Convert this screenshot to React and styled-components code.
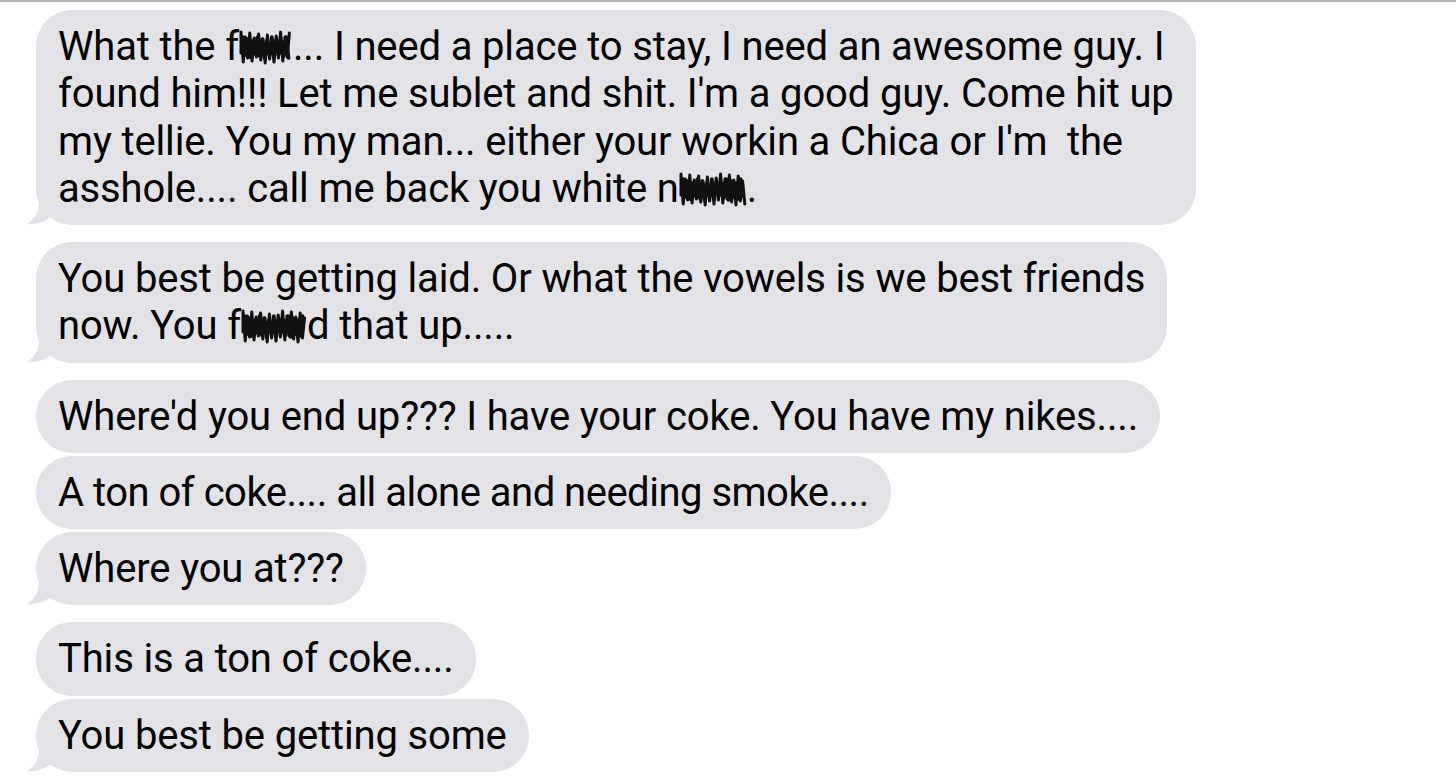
import React from "react";
import styled, { createGlobalStyle } from "styled-components";

const GlobalStyle = createGlobalStyle`
  html, body {
    margin: 0;
    padding: 0;
    background: #ffffff;
  }
  body {
    font-family: Roboto, "Liberation Sans", sans-serif;
  }
`;

const Page = styled.div`
  width: 1456px;
  height: 784px;
  box-sizing: border-box;
  border-top: 2px solid #b4b4b4;
  padding: 8px 0 0 36px;
  display: flex;
  flex-direction: column;
  align-items: flex-start;
  overflow: hidden;
`;

const Bubble = styled.div`
  position: relative;
  background: #e3e3e7;
  color: #000;
  border-radius: 36px;
  padding: 13px 22px;
  font-size: 40px;
  line-height: 47.25px;
  letter-spacing: ${(p) => (p.$tight ? "-0.5px" : "-0.15px")};
  white-space: nowrap;
  margin-top: ${(p) => (p.$gap ? `${p.$gap}px` : "0")};
`;

const Tail = styled.svg`
  position: absolute;
  left: -9px;
  bottom: 0;
  width: 24px;
  height: 24px;
`;

const Scribble = styled.svg`
  display: inline-block;
  vertical-align: -7px;
  height: 40px;
`;

function Blot({ w }) {
  // zig-zag pen strokes, like a marker scribbled over a word
  let d = "M2 26";
  const n = Math.floor(w / 2.2);
  for (let i = 0; i < n; i++) {
    const x = 2 + i * 2.2;
    if (x > w - 2) break;
    const top = 5 + ((i * 7) % 9);
    const bot = 30 + ((i * 5) % 7);
    d += i % 2 ? ` L${x.toFixed(1)} ${bot}` : ` L${x.toFixed(1)} ${top}`;
  }
  let d2 = "M4 14";
  for (let i = 0; i < n; i++) {
    const x = 4 + i * 2.4;
    if (x > w - 3) break;
    d2 += i % 2 ? ` L${x.toFixed(1)} ${27 + (i % 5)}` : ` L${x.toFixed(1)} ${10 + (i % 6)}`;
  }
  return (
    <Scribble width={w} viewBox={`0 0 ${w} 40`}>
      <path d={d} stroke="#111" strokeWidth="3" fill="none" strokeLinejoin="round" strokeLinecap="round" />
      <path d={d2} stroke="#111" strokeWidth="3.6" fill="none" strokeLinejoin="round" strokeLinecap="round" />
    </Scribble>
  );
}

function Msg({ children, tail, gap, tight }) {
  return (
    <Bubble $gap={gap} $tight={tight}>
      {children}
      {tail && (
        <Tail viewBox="0 0 24 24">
          <path d="M12 0 C12 11 8 18 0 23 C9 24 17 21 24 16 L24 0 Z" fill="#e3e3e7" />
        </Tail>
      )}
    </Bubble>
  );
}

export default function App() {
  return (
    <>
      <GlobalStyle />
      <Page>
        <Msg tail>
          What the f<Blot w={54} />... I need a place to stay, I need an awesome guy. I
          <br />
          found him!!! Let me sublet and shit. I'm a good guy. Come hit up
          <br />
          my tellie. You my man... either your workin a Chica or I'm&nbsp; the
          <br />
          asshole.... call me back you white n<Blot w={68} />.
        </Msg>
        <Msg tail gap={17}>
          You best be getting laid. Or what the vowels is we best friends
          <br />
          now. You f<Blot w={66} />d that up.....
        </Msg>
        <Msg gap={17}>Where'd you end up??? I have your coke. You have my nikes....</Msg>
        <Msg gap={3} tight>A ton of coke.... all alone and needing smoke....</Msg>
        <Msg tail gap={3}>Where you at???</Msg>
        <Msg gap={17}>This is a ton of coke....</Msg>
        <Msg tail gap={3}>You best be getting some</Msg>
      </Page>
    </>
  );
}
